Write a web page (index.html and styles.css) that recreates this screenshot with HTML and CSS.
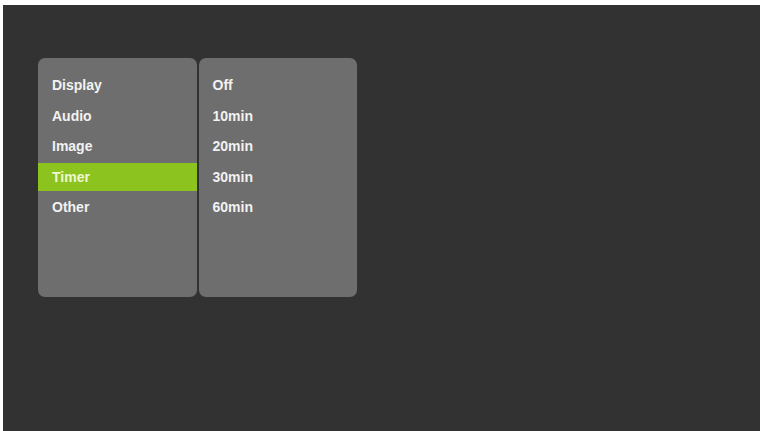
FILE: index.html
```html
<!DOCTYPE html>
<html>
<head>
<meta charset="utf-8">
<link rel="stylesheet" href="styles.css">
</head>
<body>
<div class="screen">
  <div class="menus">
    <ul class="panel">
      <li class="row">Display</li>
      <li class="row">Audio</li>
      <li class="row">Image</li>
      <li class="row active">Timer</li>
      <li class="row">Other</li>
    </ul>
    <ul class="panel">
      <li class="row">Off</li>
      <li class="row">10min</li>
      <li class="row">20min</li>
      <li class="row">30min</li>
      <li class="row">60min</li>
    </ul>
  </div>
</div>
</body>
</html>
```
FILE: styles.css
```css
html, body {
  margin: 0;
  padding: 0;
  background: #ffffff;
}
body {
  padding: 5px 2px 0 3px;
  height: 431px;
  box-sizing: border-box;
  overflow: hidden;
}
.screen {
  height: 426px;
  background: #323232;
  padding: 53px 0 0 35px;
  box-sizing: border-box;
}
.menus {
  display: flex;
  gap: 2px;
}
.panel {
  list-style: none;
  margin: 0;
  padding: 13px 0 0 0;
  width: 158.5px;
  height: 239px;
  box-sizing: border-box;
  background: #6e6e6e;
  border-radius: 7px;
  display: flex;
  flex-direction: column;
  gap: 2px;
}
.row {
  height: 28.5px;
  line-height: 28.5px;
  padding-left: 14px;
  font-family: "Liberation Sans", Arial, sans-serif;
  font-weight: bold;
  font-size: 14px;
  color: #f2f2f2;
}
.row.active {
  background: #8dc31e;
  color: #eef7d6;
}
```
